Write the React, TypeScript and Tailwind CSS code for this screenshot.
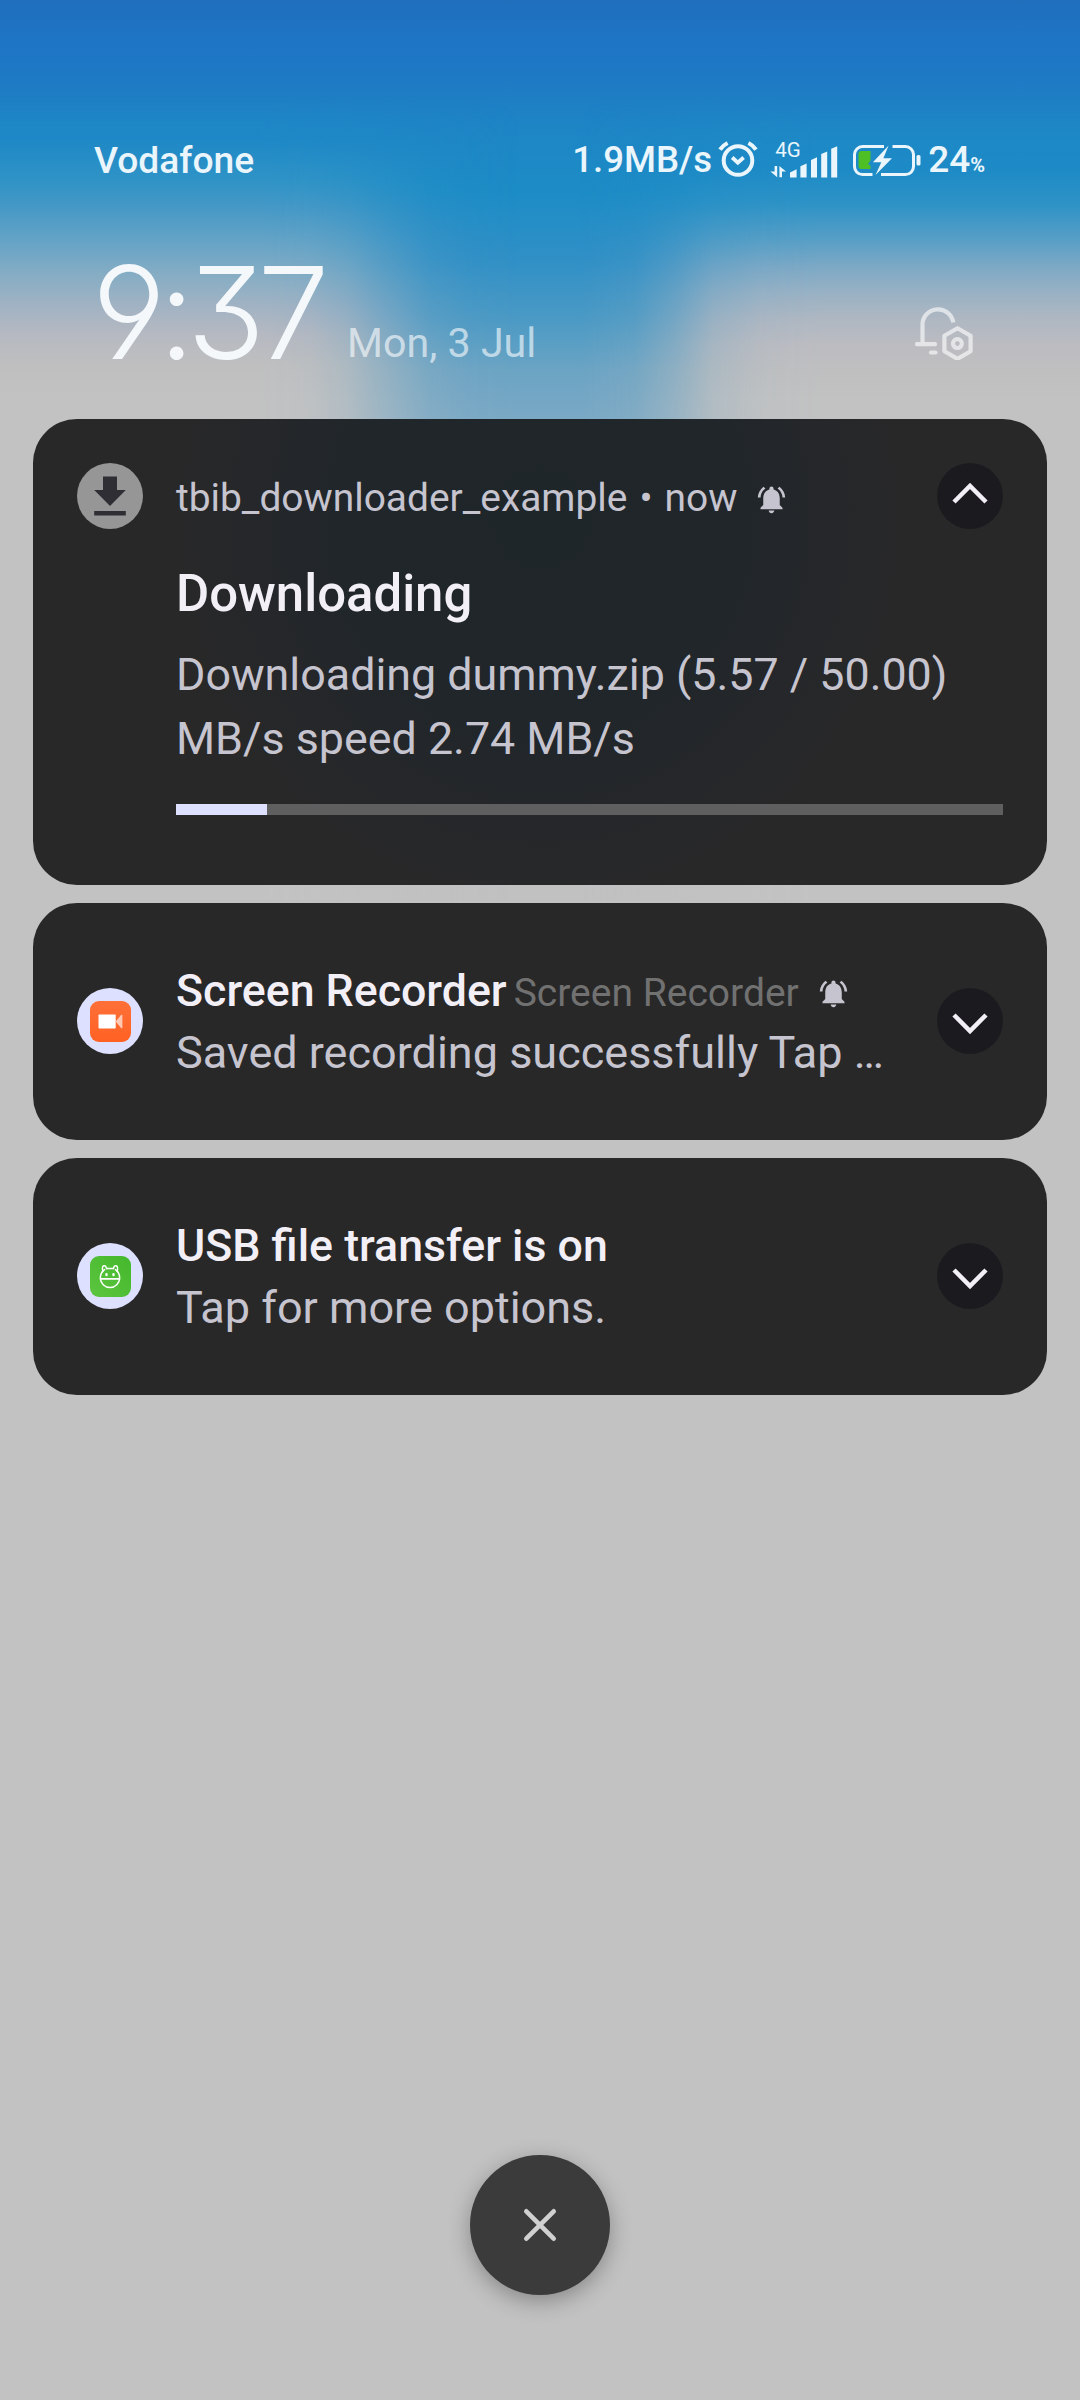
import type { ReactNode } from "react";
import { MdNotificationsActive } from "react-icons/md";

function Backdrop() {
  return (
    <div className="absolute inset-x-0 top-0 h-[900px] bg-[linear-gradient(to_bottom,#1f6fbc_0px,#1e75c6_45px,#1e7ac4_80px,#1e85c5_125px,#1c8cc6_190px,#3090c6_260px,#4b9ac5_320px,#6ba4c4_370px,#7aa9c5_420px,#c1c1c1_700px)]">
      <div className="absolute inset-y-0 left-0 w-[540px] bg-[linear-gradient(to_bottom,rgba(28,140,198,0)_100px,#1e88c6_140px,#2f93c6_180px,#4398c6_205px,#64a3c6_240px,#86adc4_275px,#a3b3c3_308px,#b6b9c1_335px,#bfbfc0_365px,#c2c2c2_400px)] [mask-image:linear-gradient(to_right,black_260px,rgba(0,0,0,0.95)_310px,rgba(0,0,0,0.78)_347px,rgba(0,0,0,0.48)_385px,rgba(0,0,0,0.16)_430px,rgba(0,0,0,0.04)_470px,transparent_520px)]" />
      <div className="absolute inset-y-0 right-0 w-[540px] bg-[linear-gradient(to_bottom,rgba(28,140,198,0)_100px,#1d8ac6_170px,#2f93c6_205px,#559ec6_238px,#7ea9c5_268px,#98b1c4_292px,#aeb7c2_318px,#bcbcc1_345px,#bfbfc0_370px,#c2c2c2_400px)] [mask-image:linear-gradient(to_left,black_260px,rgba(0,0,0,0.95)_320px,rgba(0,0,0,0.78)_367px,rgba(0,0,0,0.42)_405px,rgba(0,0,0,0.12)_445px,transparent_500px)]" />
    </div>
  );
}

function AlarmIcon() {
  return (
    <svg width="40" height="40" viewBox="0 0 40 40" fill="none" stroke="currentColor" strokeWidth="4" strokeLinecap="butt">
      <circle cx="20" cy="20.5" r="14.3" />
      <path d="M14.2 17.5 19.8 22.6 25.6 17.5" strokeWidth="3.8" />
      <path d="M2 9.6 Q4.6 5.4 9.6 3" />
      <path d="M30.4 3 Q35.4 5.4 38 9.6" />
    </svg>
  );
}

function SignalIcon() {
  return (
    <div className="flex h-[36px] w-[68px] flex-col">
      <span className="ml-[5px] h-[19px] text-[20.5px] leading-[17px] font-normal">4G</span>
      <svg className="-mt-[16px]" width="68" height="33" viewBox="0 0 68 33" fill="currentColor">
        <path d="M4.6 21h2.6v11.3L0.4 26.6h4.2zM9.4 32.3V21l6.6 5.4h-4v5.9z" />
        <path d="M20 32.5v-5l6.6-3.2v8.2zM30.4 32.5V21.2l6.2-2.8v14.1zM41 32.5V15l6-2.8v20.3zM51.2 32.5V9l6-2.6v26.1zM61.2 32.5V3.8l6-2.6v31.3z" />
      </svg>
    </div>
  );
}

function BatteryIcon() {
  return (
    <svg width="70" height="34" viewBox="0 0 70 34" fill="none">
      <path d="M33 3.6H11.5a8 8 0 0 0-8 8v12a8 8 0 0 0 8 8H21.5" stroke="currentColor" strokeWidth="3" />
      <path d="M41.5 3.6H54.5a8 8 0 0 1 8 8v12a8 8 0 0 1-8 8H30" stroke="currentColor" strokeWidth="3" />
      <path d="M10.5 8h9v9.5l-2.5 3.5 2.5 1.5v3.5h-9a3 3 0 0 1-3-3V11a3 3 0 0 1 3-3z" fill="#4fbf26" />
      <path d="M37.6 2.5 21.9 19.3h8.4L24.5 32 41 15.2h-8.6z" fill="currentColor" />
      <rect x="65.5" y="12" width="4" height="10.5" rx="1.6" fill="currentColor" />
    </svg>
  );
}

function StatusBar() {
  return (
    <div className="flex h-[40px] items-center justify-between text-[#eaf5fc]">
      <span className="text-[37.2px] leading-[40px] font-medium">Vodafone</span>
      <div className="flex items-center">
        <span className="text-[36.6px] leading-[40px] font-medium">1.9MB/s</span>
        <span className="ml-[6px]"><AlarmIcon /></span>
        <span className="ml-[12px]"><SignalIcon /></span>
        <span className="ml-[13px]"><BatteryIcon /></span>
        <div className="ml-[7px] flex items-baseline font-medium">
          <span className="text-[37px] leading-[40px]">24</span>
          <span className="text-[20px] font-bold">%</span>
        </div>
      </div>
    </div>
  );
}

function BellSettingsIcon() {
  return (
    <svg width="60" height="60" viewBox="0 0 60 60" fill="none" stroke="white" strokeWidth="4.2" strokeLinecap="round" className="opacity-[0.62]">
      <path d="M7.5 43.5V24a15.5 15.5 0 0 1 30.8-1.5" strokeLinecap="butt" />
      <path d="M2 44.2H20" />
      <path d="M16 52.5H20.5" />
      <path d="M42.5 28.2 55.6 35.8V51.2L42.5 58.8 29.4 51.2V35.8Z" strokeLinejoin="round" />
      <circle cx="42.4" cy="43.6" r="4.4" />
    </svg>
  );
}

function Clock() {
  return (
    <div className="flex items-end">
      <div className="h-[96px] w-[237px] whitespace-nowrap pt-px text-[128.5px] leading-[96px] font-[270] text-[#f4f8fb] [font-family:Inter,Roboto,sans-serif] [font-feature-settings:'cv04','cv09','cv03']">
        <span className="-ml-[2px] tracking-[-0.059em]">9:37</span>
      </div>
      <span className="mb-[-3px] ml-[16px] text-[41.2px] leading-[40px] text-white/60">Mon, 3 Jul</span>
    </div>
  );
}

function Chevron({ up = false }: { up?: boolean }) {
  return (
    <div className={`size-[66px] shrink-0 rounded-full bg-[#1b1a1f] ${up ? "" : "mb-px"}`}>
      <svg width="66" height="66" viewBox="0 0 66 66" fill="none" stroke="#f3eff7" strokeWidth="4.5">
        <path d={up ? "M17 39 33 23 49 39" : "M17 27 33 43 49 27"} />
      </svg>
    </div>
  );
}

function Bubble({ children, tone }: { children: ReactNode; tone: string }) {
  return (
    <div className={`flex size-[66px] shrink-0 items-center justify-center rounded-full ${tone}`}>{children}</div>
  );
}

function DownloadIcon() {
  return (
    <svg width="66" height="66" viewBox="0 0 66 66" fill="#2f2e34">
      <path d="M26 13.5H40V27H48.8L33 43 17.2 27H26zM17.2 48H48.8V52.6H17.2z" />
    </svg>
  );
}

function RecorderIcon() {
  return (
    <div className="flex size-[41px] items-center justify-center rounded-[9px] bg-linear-to-b from-[#ff7038] to-[#ff6122]">
      <svg width="25" height="15" viewBox="0 0 25 15">
        <rect x="0.5" y="0.5" width="17.2" height="14" rx="0.8" fill="white" />
        <path d="M17.7 7.5 23 1q1.4-.8 1.4.6V13.4q0 1.4-1.4.6z" fill="#ffc9b4" />
      </svg>
    </div>
  );
}

function UsbIcon() {
  return (
    <div className="flex size-[41px] items-center justify-center rounded-[9px] bg-linear-to-tr from-[#5cc53f] to-[#43b82c]">
      <svg width="24" height="26" viewBox="0 0 24 26" fill="none" stroke="white" strokeWidth="1.5" strokeLinecap="round">
        <path d="M8.6 5.6H15.4M6.6 6.6C3.8 8.4 2.4 11.4 2.4 15A9.6 9.6 0 0 0 21.6 15C21.6 11.4 20.2 8.4 17.4 6.6" />
        <path d="M4.9 8.4Q3.6 3.4 5.8 2.8T8.6 5.6M19.1 8.4Q20.4 3.4 18.2 2.8T15.4 5.6" />
        <path d="M2.6 15.9H21.4" strokeWidth="1.9" />
        <path d="M8.5 11.3v.7M15.5 11.3v.7" strokeWidth="2.4" />
      </svg>
    </div>
  );
}

function AlertBell({ className }: { className: string }) {
  return <MdNotificationsActive className={`size-[33px] shrink-0 text-[#c6c4cf] ${className}`} />;
}

function DownloadCard() {
  return (
    <section className="h-[466px] rounded-[44px] bg-[#282828] bg-[radial-gradient(ellipse_380px_400px_at_507px_100px,#1f262a_0%,#20262a_50%,#25272a_75%,#282828_100%)] px-[44px] pt-[44px]">
      <header className="flex items-center">
        <Bubble tone="bg-[#969696]"><DownloadIcon /></Bubble>
        <div className="ml-[33px] flex flex-1 items-center pt-[4px] text-[38.9px] leading-[44px] text-[#c6c4cf]">
          <span>tbib_downloader_example</span>
          <span className="mx-[12px]">•</span>
          <span>now</span>
          <AlertBell className="mt-[3px] ml-[18px]" />
        </div>
        <Chevron up />
      </header>
      <div className="ml-[99px] pt-[33px]">
        <h2 className="text-[50.9px] leading-[64px] font-medium text-[#f3eff7]">Downloading</h2>
        <p className="mt-[17px] text-[44.8px] leading-[64px] text-[#c6c4cf]">
          Downloading dummy.zip (5.57 / 50.00)
          <br />
          MB/s speed 2.74 MB/s
        </p>
        <div className="mt-[33px] h-[11px] bg-[#5f5f5f]">
          <div className="h-full w-[11%] bg-[#dde0ff]" />
        </div>
      </div>
    </section>
  );
}

function CompactCard({ icon, title, source, text }: { icon: ReactNode; title: string; source?: string; text: string }) {
  return (
    <section className="flex h-[237px] items-center rounded-[44px] bg-[#282828] px-[44px]">
      <Bubble tone="mb-px bg-[#dde0ff]">{icon}</Bubble>
      <div className="ml-[33px] flex-1">
        <div className="flex h-[62px] items-baseline">
          <span className="text-[44.7px] leading-[62px] font-medium text-[#f3eff7]">{title}</span>
          {source && (
            <>
              <span className="ml-[7px] text-[39px] leading-[62px] text-[#717171]">{source}</span>
              <AlertBell className="mt-[6px] ml-[18px] self-center" />
            </>
          )}
        </div>
        <p className="text-[45px] leading-[62px] whitespace-nowrap text-[#c6c4cf]">{text}</p>
      </div>
      <Chevron />
    </section>
  );
}

export default function App() {
  return (
    <div className="relative h-[2400px] w-[1080px] overflow-hidden bg-[#c2c2c2] [font-family:Roboto,sans-serif]">
      <Backdrop />
      <div className="relative flex h-full flex-col px-[33px]">
        <div className="h-[419px] pt-[140px] pr-[62px] pl-[61px]">
          <StatusBar />
          <div className="mt-[84px] flex items-end justify-between">
            <Clock />
            <div className="mr-[10px]"><BellSettingsIcon /></div>
          </div>
        </div>
        <main className="flex flex-col gap-[18px]">
          <DownloadCard />
          <CompactCard icon={<RecorderIcon />} title="Screen Recorder" source="Screen Recorder" text="Saved recording successfully Tap …" />
          <CompactCard icon={<UsbIcon />} title="USB file transfer is on" text="Tap for more options." />
        </main>
        <button className="mt-auto mb-[105px] size-[140px] self-center rounded-full bg-[#3b3b3b] shadow-[0_6px_22px_rgba(0,0,0,0.3)]">
          <svg width="140" height="140" viewBox="0 0 140 140" stroke="#d0d0d0" strokeWidth="4.6" strokeLinecap="round">
            <path d="M56.3 56.3 83.7 83.7M83.7 56.3 56.3 83.7" />
          </svg>
        </button>
      </div>
    </div>
  );
}
